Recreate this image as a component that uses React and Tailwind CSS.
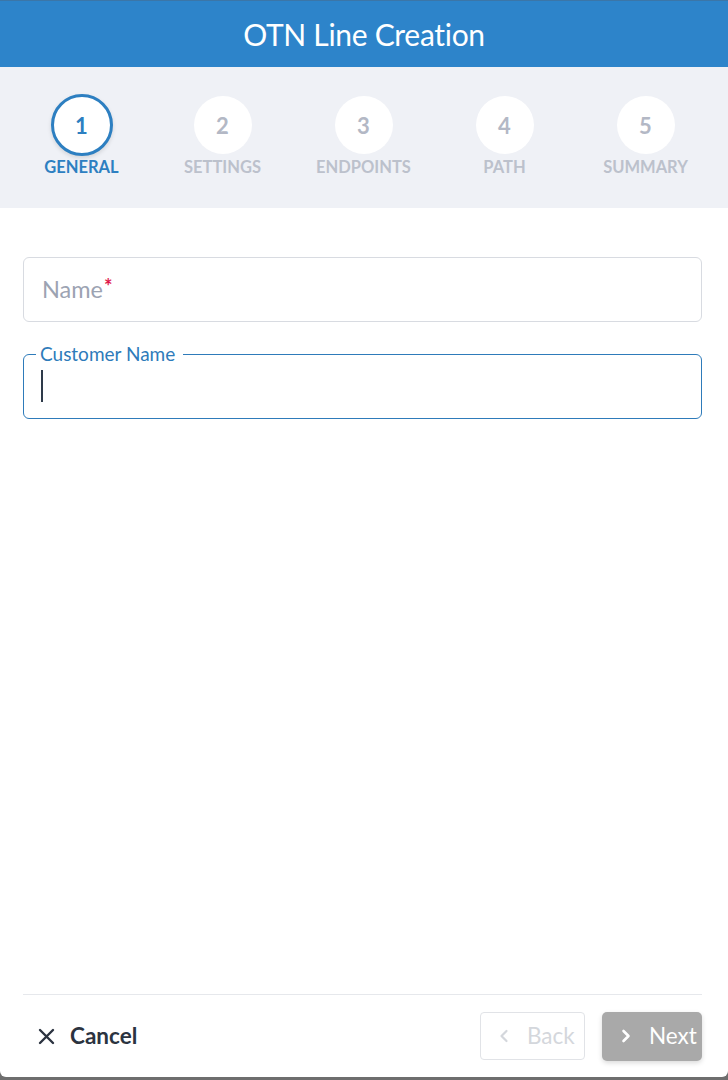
import React from "react";

const steps = [
  { n: 1, label: "GENERAL", active: true },
  { n: 2, label: "SETTINGS" },
  { n: 3, label: "ENDPOINTS" },
  { n: 4, label: "PATH" },
  { n: 5, label: "SUMMARY" },
];

export default function App() {
  return (
    <div className="w-[728px] h-[1080px] bg-[#6e6e6e] flex flex-col" style={{ fontFamily: '"Lato", "Noto Sans", sans-serif' }}>
      <div className="h-[1077px] bg-white rounded-br-[6px] rounded-bl-[6px] flex flex-col overflow-hidden">
        <div className="h-[67px] bg-[#2d84ca] border-t border-[#3b76a8] flex items-center justify-center">
          <span className="text-white text-[30px] tracking-[-0.3px]">OTN Line Creation</span>
        </div>
        <div className="h-[141px] bg-[#eff1f6] flex px-[11px] pt-[29px]">
          {steps.map((s) => (
            <div key={s.n} className="w-[141px] flex flex-col items-center">
              {s.active ? (
                <div className="w-[62px] h-[62px] rounded-full bg-white border-[3px] border-[#2d7fc1] flex items-center justify-center shadow-[0_2px_4px_rgba(0,0,0,0.12)] mt-[-2px] mb-[-2px]">
                  <span className="text-[#2d7fc1] text-[22px] font-bold">{s.n}</span>
                </div>
              ) : (
                <div className="w-[58px] h-[58px] rounded-full bg-white flex items-center justify-center">
                  <span className="text-[#b3b8c5] text-[22px] font-bold">{s.n}</span>
                </div>
              )}
              <span className={"mt-[3px] text-[16.5px] font-bold leading-[20px] " + (s.active ? "text-[#2d7fc1]" : "text-[#bcc1cc]")}>{s.label}</span>
            </div>
          ))}
        </div>
        <div className="flex-1 flex flex-col pl-[23px] pr-[26px] pt-[49px]">
          <div className="h-[65px] border border-[#d8dbe1] rounded-[6px] flex items-center px-[18px]">
            <span className="text-[23.5px] text-[#9ca3b2]">Name</span>
            <span className="text-[#e0174a] text-[20px] font-bold self-start mt-[13px] ml-[1px]">*</span>
          </div>
          <fieldset className="mt-[22px] h-[75px] border-[1.5px] border-[#2e7bba] rounded-[6px] px-[12px]">
            <legend className="px-[4px] pr-[8px] text-[19px] text-[#2e7bba] leading-[20px]">Customer Name</legend>
            <div className="w-[1.5px] h-[32px] bg-[#2e3a4a] mt-[6px] ml-[5px]" />
          </fieldset>
          <div className="flex-1" />
          <div className="border-t border-[#e6e8ec] h-[83px] flex items-center">
            <div className="flex items-center pl-[15px]">
              <svg width="17" height="17" viewBox="0 0 17 17" className="text-[#2b3340]">
                <path d="M2 2 L15 15 M15 2 L2 15" stroke="currentColor" strokeWidth="2.4" strokeLinecap="round" />
              </svg>
              <span className="ml-[15px] text-[22.5px] font-bold text-[#2b3340]">Cancel</span>
            </div>
            <div className="flex-1" />
            <div className="w-[105px] h-[48px] border border-[#e1e3e7] rounded-[4px] flex items-center pl-[18px] gap-[18px] mr-[17px]">
              <svg width="10" height="16" viewBox="0 0 10 16" className="text-[#d4d7dc]">
                <path d="M7.5 3 L2.5 8 L7.5 13" stroke="currentColor" strokeWidth="2.2" fill="none" strokeLinecap="round" strokeLinejoin="round" />
              </svg>
              <span className="text-[22.5px] text-[#d4d7dc]">Back</span>
            </div>
            <div className="w-[100px] h-[49px] bg-[#a9a9a9] rounded-[5px] flex items-center pl-[19px] gap-[18px] shadow-[0_2px_5px_rgba(0,0,0,0.15)]">
              <svg width="10" height="16" viewBox="0 0 10 16" className="text-white">
                <path d="M2.5 3 L7.5 8 L2.5 13" stroke="currentColor" strokeWidth="2.6" fill="none" strokeLinecap="round" strokeLinejoin="round" />
              </svg>
              <span className="text-[22.5px] text-white">Next</span>
            </div>
          </div>
        </div>
      </div>
    </div>
  );
}
